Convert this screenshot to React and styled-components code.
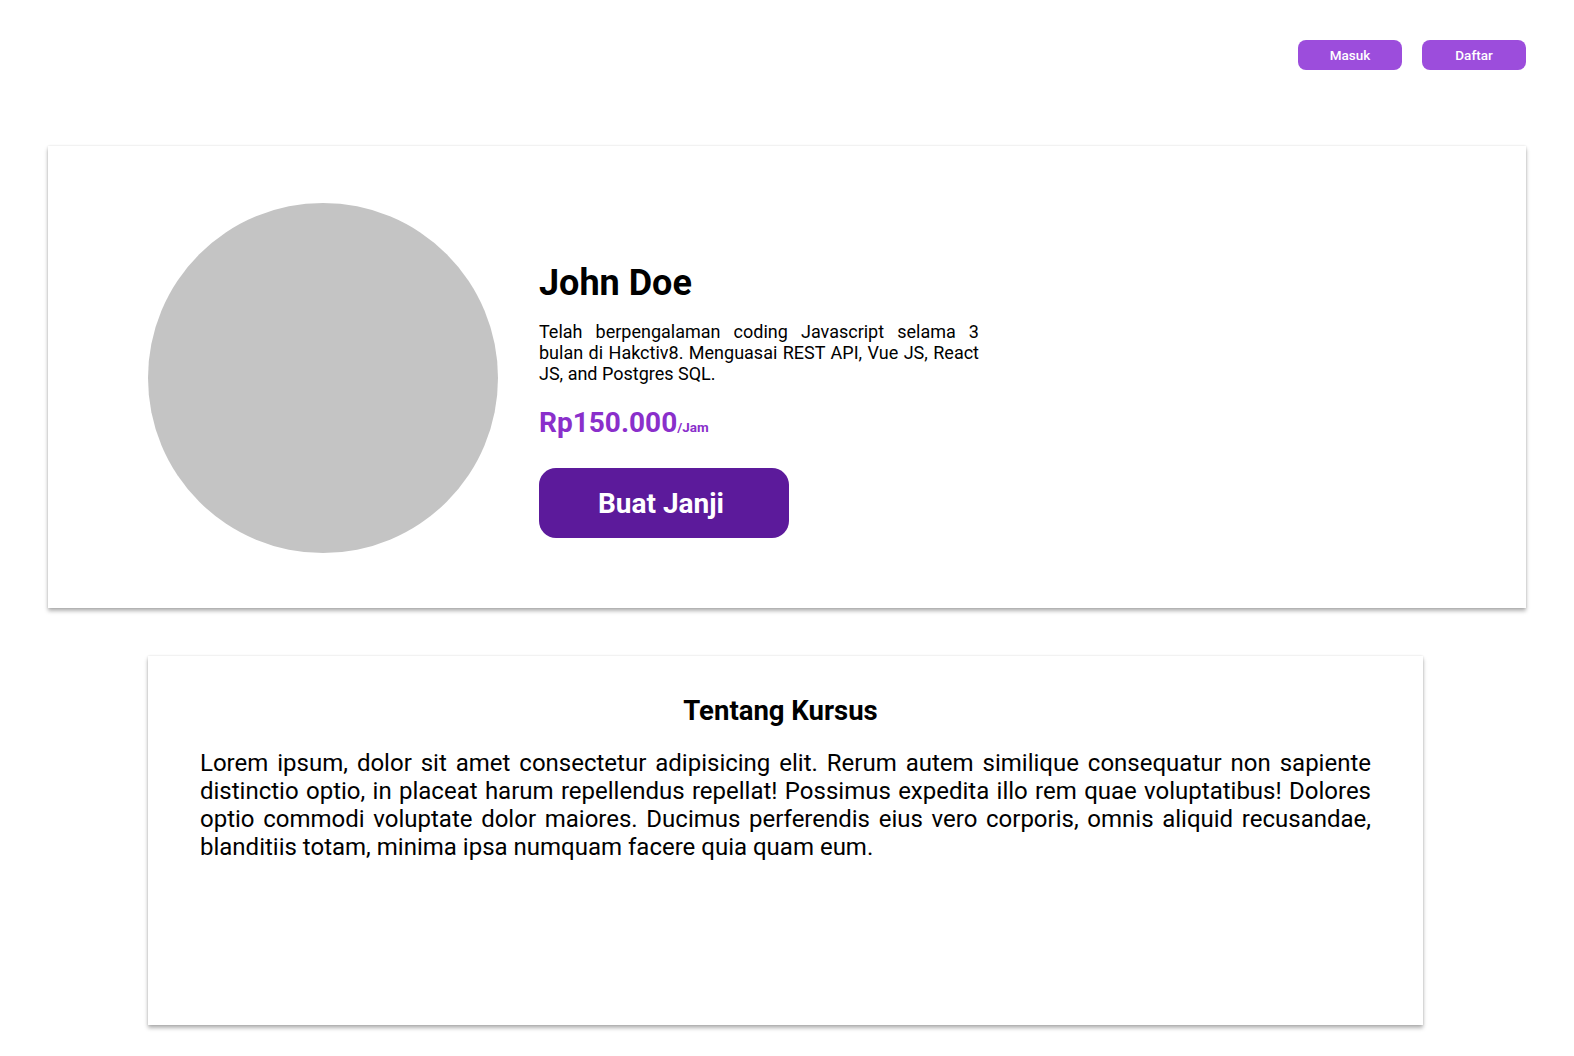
import React from "react";
import styled, { createGlobalStyle } from "styled-components";

const GlobalStyle = createGlobalStyle`
  html, body {
    margin: 0;
    padding: 0;
    background: #ffffff;
    font-family: Roboto, "Liberation Sans", sans-serif;
    color: #000000;
  }
  * { box-sizing: border-box; }
`;

const Page = styled.div`
  width: 1574px;
  min-height: 1056px;
  padding: 40px 48px 0 48px;
`;

const Header = styled.header`
  display: flex;
  justify-content: flex-end;
  gap: 20px;
  height: 30px;
`;

const NavButton = styled.button`
  width: 104px;
  height: 30px;
  border: none;
  border-radius: 8px;
  background: #9c4ddc;
  color: #ffffff;
  font-family: Roboto, "Liberation Sans", sans-serif;
  font-size: 13.5px;
  font-weight: 500;
  display: flex;
  align-items: center;
  justify-content: center;
  padding: 0;
  cursor: pointer;
`;

const Card = styled.section`
  background: #ffffff;
  box-shadow: 0 3px 4px rgba(0, 0, 0, 0.3), 0 0 2px rgba(0, 0, 0, 0.12);
`;

const ProfileCard = styled(Card)`
  margin-top: 76px;
  width: 1478px;
  height: 462px;
  display: flex;
  align-items: flex-start;
  gap: 41px;
  padding: 57px 100px 55px 100px;
`;

const Avatar = styled.div`
  width: 350px;
  height: 350px;
  border-radius: 50%;
  background: #c4c4c4;
  flex-shrink: 0;
`;

const Info = styled.div`
  display: flex;
  flex-direction: column;
  align-items: flex-start;
  padding-top: 59px;
  width: 440px;
`;

const Name = styled.h1`
  margin: 0;
  font-size: 36px;
  font-weight: 700;
  line-height: normal;
`;

const Bio = styled.p`
  margin: 17px 0 0 0;
  font-size: 18px;
  line-height: normal;
  text-align: justify;
  width: 440px;
`;

const Price = styled.div`
  margin-top: 22px;
  color: #8a2fcb;
  font-size: 28px;
  font-weight: 700;
  line-height: normal;
`;

const Unit = styled.span`
  font-size: 13.5px;
  font-weight: 700;
`;

const BookButton = styled.button`
  margin-top: 29px;
  width: 250px;
  height: 70px;
  border: none;
  border-radius: 17px;
  background: #5c1a9b;
  color: #ffffff;
  font-family: Roboto, "Liberation Sans", sans-serif;
  font-size: 28px;
  font-weight: 700;
  display: flex;
  align-items: center;
  justify-content: center;
  padding: 0 6px 0 0;
  cursor: pointer;
`;

const AboutCard = styled(Card)`
  margin: 48px 0 0 100px;
  width: 1275px;
  height: 369px;
  padding: 38px 52px 0 52px;
`;

const AboutTitle = styled.h2`
  margin: 0;
  font-size: 27.5px;
  font-weight: 700;
  line-height: normal;
  text-align: center;
  padding-right: 10px;
`;

const AboutText = styled.p`
  margin: 22px 0 0 0;
  font-size: 24px;
  line-height: normal;
  text-align: justify;
`;

export default function App() {
  return (
    <>
      <GlobalStyle />
      <Page>
        <Header>
          <NavButton>Masuk</NavButton>
          <NavButton>Daftar</NavButton>
        </Header>
        <ProfileCard>
          <Avatar />
          <Info>
            <Name>John Doe</Name>
            <Bio>
              Telah berpengalaman coding Javascript selama 3 bulan di Hakctiv8.
              Menguasai REST API, Vue JS, React JS, and Postgres SQL.
            </Bio>
            <Price>
              Rp150.000<Unit>/Jam</Unit>
            </Price>
            <BookButton>Buat Janji</BookButton>
          </Info>
        </ProfileCard>
        <AboutCard>
          <AboutTitle>Tentang Kursus</AboutTitle>
          <AboutText>
            Lorem ipsum, dolor sit amet consectetur adipisicing elit. Rerum
            autem similique consequatur non sapiente distinctio optio, in
            placeat harum repellendus repellat! Possimus expedita illo rem quae
            voluptatibus! Dolores optio commodi voluptate dolor maiores.
            Ducimus perferendis eius vero corporis, omnis aliquid recusandae,
            blanditiis totam, minima ipsa numquam facere quia quam eum.
          </AboutText>
        </AboutCard>
      </Page>
    </>
  );
}
